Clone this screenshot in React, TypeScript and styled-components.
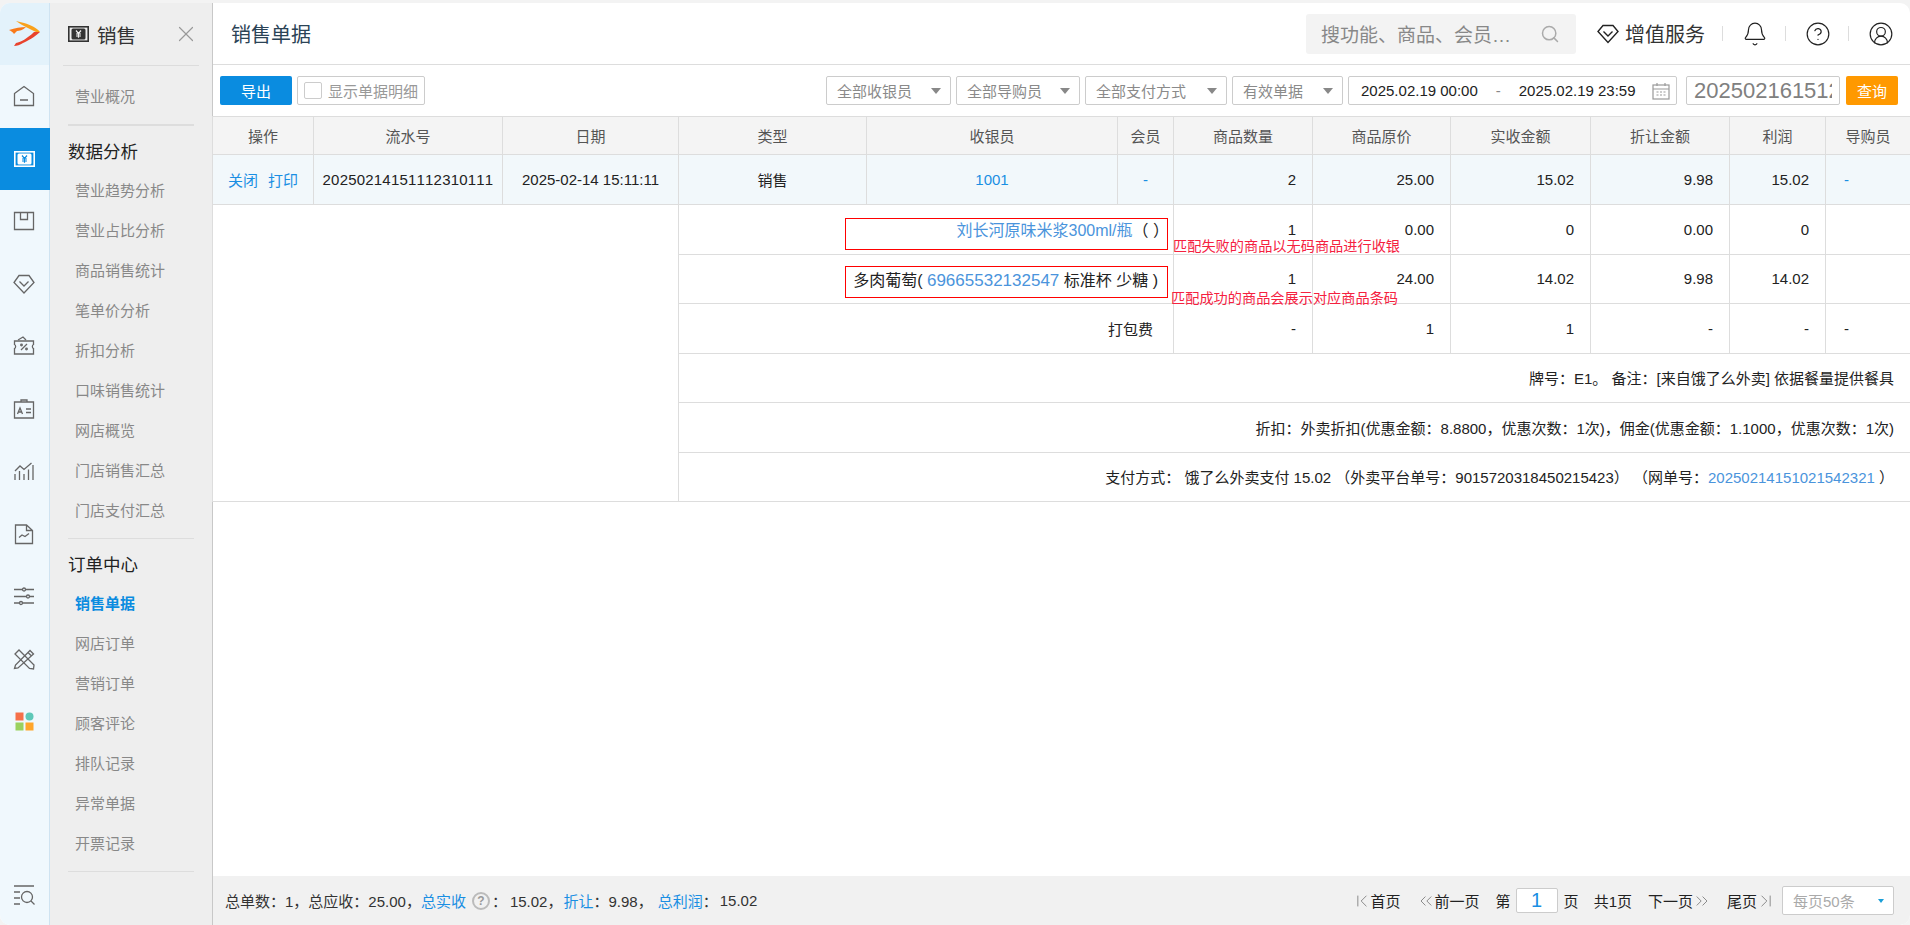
import React from 'react';
import styled, { createGlobalStyle } from 'styled-components';
import {
  Bell,
  ChevronFirst,
  ChevronLast,
  ChevronsLeft,
  ChevronsRight,
  CircleHelp,
  CircleUserRound,
  Search,
  X,
} from 'lucide-react';

const GlobalStyle = createGlobalStyle`
  html, body {
    margin: 0;
    padding: 0;
    background: #f3f3f3;
  }
  body {
    font-family: "Liberation Sans", "Noto Sans CJK SC", sans-serif;
    font-size: 15px;
    color: #333;
  }
`;

const Page = styled.div`
  box-sizing: border-box;
  width: 1910px;
  height: 925px;
  padding-top: 3px;
  overflow: hidden;
  background: #f3f3f3;
`;

const Shell = styled.div`
  display: flex;
  height: 100%;
  overflow: hidden;
  background: #fff;
  border-radius: 10px;
`;

const Rail = styled.nav`
  display: flex;
  flex-direction: column;
  flex: 0 0 50px;
  box-sizing: border-box;
  background: #f0f8fd;
  border-right: 1px solid #cfe3f1;
`;

const LogoCell = styled.div`
  display: flex;
  align-items: center;
  justify-content: center;
  flex: 0 0 62px;
  background: #e3f2fb;
`;

const RailItem = styled.div<{ $active?: boolean }>`
  display: flex;
  align-items: center;
  justify-content: center;
  flex: 0 0 62.5px;
  margin-right: ${(p) => (p.$active ? '-1px' : '0')};
  padding-right: 1px;
  color: ${(p) => (p.$active ? '#fff' : '#666')};
  background: ${(p) => (p.$active ? '#0a8ce0' : 'transparent')};
`;

const RailBottom = styled(RailItem)`
  flex: 0 0 60px;
  margin-top: auto;
`;

const Side = styled.aside`
  flex: 0 0 163px;
  box-sizing: border-box;
  background: #eee;
  border-right: 1px solid #c8c8c8;
`;

const SideHead = styled.div`
  display: flex;
  align-items: center;
  box-sizing: border-box;
  height: 63px;
  margin: 0 13px;
  padding: 0 0 0 5px;
  color: #333;
  font-size: 19.5px;
  border-bottom: 1px solid #dcdcdc;
`;

const SideHeadTitle = styled.span`
  flex: 1;
  margin-left: 8px;
`;

const SideList = styled.div`
  padding-top: 11px;
`;

const SideRule = styled.div<{ $thick?: boolean }>`
  height: ${(p) => (p.$thick ? '2px' : '1px')};
  margin: 7px 18px 7px 18px;
  background: #ddd;
`;

const SideTitle = styled.div`
  height: 38px;
  padding-left: 18px;
  color: #222;
  font-size: 17.5px;
  line-height: 38px;
`;

const SideLink = styled.div<{ $active?: boolean }>`
  height: 40px;
  padding-left: 25px;
  color: ${(p) => (p.$active ? '#0a8ce0' : '#888')};
  font-weight: ${(p) => (p.$active ? 700 : 400)};
  font-size: 15px;
  line-height: 40px;
`;

const Main = styled.main`
  display: flex;
  flex-direction: column;
  flex: 1;
  min-width: 0;
`;

const TopBar = styled.header`
  display: flex;
  align-items: center;
  flex: 0 0 62px;
  box-sizing: border-box;
  padding: 0 16px 0 18px;
  border-bottom: 1px solid #ddd;
`;

const PageTitle = styled.h1`
  flex: 1;
  margin: 0;
  color: #2b4356;
  font-weight: 400;
  font-size: 20px;
`;

const SearchBox = styled.div`
  display: flex;
  align-items: center;
  justify-content: space-between;
  box-sizing: border-box;
  width: 270px;
  height: 40px;
  padding: 0 16px 0 15px;
  color: #888;
  font-size: 19px;
  background: #f3f3f3;
  border-radius: 3px;
`;

const ValueAdded = styled.div`
  display: flex;
  align-items: center;
  gap: 6px;
  margin-left: 21px;
  color: #333;
  font-size: 20px;
`;

const BarSep = styled.span`
  width: 1px;
  height: 15px;
  margin: 0 19px 0 17px;
  background: #ddd;
`;

const BarIcon = styled.span`
  display: flex;
  color: #222;
`;

const Toolbar = styled.div`
  display: flex;
  align-items: center;
  flex: 0 0 51px;
  box-sizing: border-box;
  padding: 0 12px 0 7px;
`;

const ExportButton = styled.button`
  width: 72px;
  height: 29px;
  padding: 0;
  color: #fff;
  font: inherit;
  background: #0a8ce0;
  border: 0;
  border-radius: 2px;
`;

const DetailToggle = styled.label`
  display: flex;
  align-items: center;
  gap: 6px;
  box-sizing: border-box;
  width: 128px;
  height: 29px;
  margin-left: 5px;
  padding-left: 6px;
  color: #999;
  background: #fff;
  border: 1px solid #ccc;
  border-radius: 2px;
`;

const TickBox = styled.span`
  box-sizing: border-box;
  width: 18px;
  height: 17px;
  border: 1px solid #ccc;
  border-radius: 2px;
`;

const Filters = styled.div`
  display: flex;
  gap: 5px;
  margin-left: auto;
`;

const FilterSelect = styled.div<{ $w: number }>`
  display: flex;
  align-items: center;
  justify-content: space-between;
  box-sizing: border-box;
  width: ${(p) => p.$w}px;
  height: 29px;
  padding: 0 9px 0 10px;
  color: #8a8a8a;
  background: #fff;
  border: 1px solid #ccc;
  border-radius: 2px;
`;

const Caret = styled.i<{ $color?: string; $size?: number }>`
  width: 0;
  height: 0;
  border-top: ${(p) => p.$size ?? 6}px solid ${(p) => p.$color ?? '#888'};
  border-right: ${(p) => (p.$size ?? 6) - 1}px solid transparent;
  border-left: ${(p) => (p.$size ?? 6) - 1}px solid transparent;
`;

const DateRange = styled.div`
  display: flex;
  align-items: center;
  box-sizing: border-box;
  width: 329px;
  height: 29px;
  padding: 0 6px 0 12px;
  color: #222;
  background: #fff;
  border: 1px solid #ccc;
  border-radius: 2px;
`;

const DateDash = styled.span`
  width: 41px;
  color: #888;
  text-align: center;
`;

const DateIcon = styled.span`
  display: flex;
  margin-left: auto;
  color: #999;
`;

const SerialInput = styled.input`
  box-sizing: border-box;
  width: 154px;
  height: 29px;
  margin: 0 1px 0 4px;
  padding: 0 7px;
  color: #808080;
  font-size: 22px;
  font-family: inherit;
  background: #fff;
  border: 1px solid #ccc;
  border-radius: 2px;
  outline: none;
`;

const QueryButton = styled.button`
  width: 52px;
  height: 29px;
  padding: 0;
  color: #fff;
  font: inherit;
  background: #f90;
  border: 0;
  border-radius: 2px;
`;

const TableArea = styled.div`
  flex: 1;
  min-height: 0;
`;

const Table = styled.table`
  width: 1698px;
  margin-left: -1px;
  table-layout: fixed;
  border-collapse: collapse;
  font-size: 15px;
`;

const Th = styled.th`
  height: 37px;
  padding: 0;
  color: #555;
  font-weight: 400;
  background: #f4f4f4;
  border: 1px solid #ddd;
`;

const Td = styled.td<{ $align?: 'left' | 'right' }>`
  position: relative;
  box-sizing: border-box;
  height: 49.5px;
  padding: ${(p) => (p.$align === 'left' ? '0 0 0 18px' : p.$align === 'right' ? '0 16px 0 0' : '0')};
  color: #222;
  text-align: ${(p) => p.$align ?? 'center'};
  white-space: nowrap;
  border: 1px solid #ddd;
`;

const MainRow = styled.tr`
  background: #f2f8fb;
  td {
    height: 50px;
  }
`;

const SerialCell = styled(Td)`
  letter-spacing: 0.2px;
  font-kerning: none;
`;

const ProductCell = styled(Td)<{ $pad: number }>`
  padding-right: ${(p) => p.$pad}px;
  font-size: 16px;
  text-align: right;
`;

const PackCell = styled(Td)`
  padding-right: 20px;
  text-align: right;
`;

const Link = styled.span`
  color: #1a8fe3;
`;

const SoftLink = styled.span<{ $digits?: boolean }>`
  color: #4a94dc;
  font-size: ${(p) => (p.$digits ? '17px' : 'inherit')};
`;

const ActionGap = styled.span`
  display: inline-block;
  width: 10px;
`;

/* annotation laid over the table, part of the captured picture */
const RedBox = styled.div<{ $top: number }>`
  position: absolute;
  top: ${(p) => p.$top}px;
  right: 5px;
  width: 323px;
  height: 32px;
  box-sizing: border-box;
  border: 1px solid #f00;
  pointer-events: none;
`;

const RedNote = styled.div<{ $left: number; $top: number }>`
  position: absolute;
  top: ${(p) => p.$top}px;
  left: ${(p) => p.$left}px;
  z-index: 2;
  color: #f5213f;
  font-size: 14.2px;
  line-height: 18px;
`;

const Footer = styled.footer`
  display: flex;
  align-items: center;
  justify-content: space-between;
  flex: 0 0 49px;
  padding: 0 16px 0 12px;
  color: #333;
  background: #f1f1f1;
`;

const Totals = styled.div`
  display: flex;
  align-items: center;
`;

const TotalGap = styled.span<{ $w: number }>`
  display: inline-block;
  width: ${(p) => p.$w}px;
`;

const HelpDot = styled.span`
  display: flex;
  align-items: center;
  justify-content: center;
  box-sizing: border-box;
  width: 18px;
  height: 18px;
  margin: 0 2px 0 6px;
  color: #999;
  font-weight: 700;
  font-size: 12px;
  border: 2px solid #bbb;
  border-radius: 50%;
`;

const Pager = styled.div`
  display: flex;
  align-items: center;
  color: #222;
`;

const PagerLink = styled.span<{ $gap?: number }>`
  display: flex;
  align-items: center;
  margin-left: ${(p) => p.$gap ?? 0}px;
  svg {
    margin: 0 -3px;
    color: #777;
  }
`;

const PageInput = styled.input`
  box-sizing: border-box;
  width: 42px;
  height: 25px;
  margin: 0 6px 0 5px;
  color: #1a8fe3;
  font-size: 20px;
  font-family: inherit;
  text-align: center;
  background: #fff;
  border: 1px solid #ccc;
  border-radius: 2px;
  outline: none;
`;

const PageSize = styled.div`
  display: flex;
  align-items: center;
  justify-content: space-between;
  box-sizing: border-box;
  width: 112px;
  height: 29px;
  margin-left: 9px;
  padding: 0 9px 0 10px;
  color: #aaa;
  background: #fff;
  border: 1px solid #ccc;
  border-radius: 2px;
`;

const RailSvg = ({ children }: { children: React.ReactNode }) => (
  <svg width="22" height="22" viewBox="0 0 22 22" fill="none" stroke="currentColor" strokeWidth="1.3">
    {children}
  </svg>
);

const BillIcon = ({ fill }: { fill: string }) => (
  <svg width="21" height="16" viewBox="0 0 21 16" fill="none">
    <rect x="0.8" y="0.8" width="19.4" height="14.4" fill={fill} stroke="currentColor" strokeWidth="1.6" />
    <rect x="3.5" y="2.6" width="14" height="10.8" rx="1.5" fill="currentColor" />
    <path d="M8 4.5l2.5 3 2.5-3M10.5 7.5v4.2M8 8h5M8 10h5" stroke={fill} strokeWidth="1.2" />
  </svg>
);

const railIcons: React.ReactNode[] = [
  <RailSvg>
    <path d="M1.5 8.5L11 1.500l9.500 7V20.500h-19z" />
    <path d="M7 15h8" />
  </RailSvg>,
  <BillIcon fill="#0a8ce0" />,
  <RailSvg>
    <path d="M1.500 2.500h19v17h-19zM7.500 2.500V9.500h7V2.500" />
  </RailSvg>,
  <RailSvg>
    <path d="M6 2.500h10l5 7-10 10.500L1 9.500z" />
    <path d="M6.500 8.500l4.500 4.500 4.500-4.500" />
  </RailSvg>,
  <RailSvg>
    <path d="M1.500 6h19v3.500c-1.500.5-1.500 3.500 0 4V19h-19v-5.500c1.500-.5 1.500-3.500 0-4z" />
    <path d="M8 15l6-6M5 5l5-3 3 3" />
    <circle cx="8.500" cy="10" r=".8" />
    <circle cx="13.500" cy="14" r=".8" />
  </RailSvg>,
  <RailSvg>
    <path d="M1.500 4h19v16h-19zM8 4V2h6v2" />
    <path d="M4.500 16l2.500-6 2.500 6M5.500 14h3M13 11h5M13 14.500h5" />
  </RailSvg>,
  <RailSvg>
    <path d="M2 20v-6M6.500 20v-9M11 20v-6M15.500 20V9.500M20 20V5M2 11l5-5 4 3.500L18.500 3" />
  </RailSvg>,
  <RailSvg>
    <path d="M2.500 2h11l6 5.500V20.500h-17zM13.500 2v5.500h6" />
    <path d="M6 14.500l3-2.500 3 1.500 4-3" />
  </RailSvg>,
  <RailSvg>
    <path d="M1 4.500h20M1 11.500h20M1 18h20" />
    <circle cx="11" cy="4.500" r="1.500" fill="#f0f8fd" />
    <circle cx="15" cy="11.500" r="1.500" fill="#f0f8fd" />
    <circle cx="8" cy="18" r="1.500" fill="#f0f8fd" />
  </RailSvg>,
  <RailSvg>
    <path d="M2 6l4-4 15 15-.5 4-4-.5z" />
    <path d="M20.500 6l-3.500-3.500L2.500 17l-1 3.500 3.500-.5zM15 4.500l3.500 3.500" />
  </RailSvg>,
  <svg width="19" height="19" viewBox="0 0 19 19">
    <rect x="0.500" y="0.500" width="8" height="8" fill="#f5704a" />
    <circle cx="14.500" cy="4.500" r="4" fill="#5ec8b8" />
    <rect x="0.500" y="10.500" width="8" height="8" fill="#9ad15f" />
    <rect x="10.500" y="10.500" width="8" height="8" fill="#ffa62b" />
  </svg>,
];

const Logo = () => (
  <svg width="32" height="26" viewBox="0 0 32 26">
    <path d="M7 0l8 2c7 2 13 5 16 9h-4C21 8 14 5 7 0z" fill="#f9a11b" />
    <path d="M0 9c6-2 12-3 17-3-3 3-7 4-9 4l-3 3c-1-2-3-3-5-4z" fill="#f97a1a" />
    <path d="M31 11c-5 5-13 9-17 11-3 2-6 3-9 3l2-3c5-1 12-5 18-11z" fill="#e8432d" />
  </svg>
);

const columns = [101, 189, 176, 188, 251, 56, 139, 138, 140, 139, 96, 85];
const headers = ['操作', '流水号', '日期', '类型', '收银员', '会员', '商品数量', '商品原价', '实收金额', '折让金额', '利润', '导购员'];
const analysisLinks = ['营业趋势分析', '营业占比分析', '商品销售统计', '笔单价分析', '折扣分析', '口味销售统计', '网店概览', '门店销售汇总', '门店支付汇总'];
const orderLinks = ['销售单据', '网店订单', '营销订单', '顾客评论', '排队记录', '异常单据', '开票记录'];

const App = () => {
  return (
    <Page>
      <GlobalStyle />
      <Shell>
        <Rail>
          <LogoCell>
            <Logo />
          </LogoCell>
          {railIcons.map((icon, i) => (
            <RailItem key={i} $active={i === 1}>
              {icon}
            </RailItem>
          ))}
          <RailBottom>
            <RailSvg>
              <path d="M1 2h20M1 8h6M1 14h6M1 20h6" />
              <circle cx="14" cy="13" r="5.500" />
              <path d="M18 17l3.500 3.500" />
            </RailSvg>
          </RailBottom>
        </Rail>

        <Side>
          <SideHead>
            <BillIcon fill="#eee" />
            <SideHeadTitle>销售</SideHeadTitle>
            <X size={26} strokeWidth={1.1} color="#999" />
          </SideHead>
          <SideList>
            <SideLink>营业概况</SideLink>
            <SideRule $thick />
            <SideTitle>数据分析</SideTitle>
            {analysisLinks.map((name) => (
              <SideLink key={name}>{name}</SideLink>
            ))}
            <SideRule />
            <SideTitle>订单中心</SideTitle>
            {orderLinks.map((name, i) => (
              <SideLink key={name} $active={i === 0}>
                {name}
              </SideLink>
            ))}
            <SideRule />
          </SideList>
        </Side>

        <Main>
          <TopBar>
            <PageTitle>销售单据</PageTitle>
            <SearchBox>
              <span>搜功能、商品、会员…</span>
              <Search size={20} color="#aaa" strokeWidth={1.8} />
            </SearchBox>
            <ValueAdded>
              <svg width="22" height="20" viewBox="0 0 22 20" fill="none" stroke="#222" strokeWidth="1.4">
                <path d="M6 1.500h10l5 6-10 11L1 7.500z" />
                <path d="M6.500 7.500l4.500 4.500 4.500-4.500" />
              </svg>
              增值服务
            </ValueAdded>
            <BarSep />
            <BarIcon>
              <Bell size={26} strokeWidth={1.1} />
            </BarIcon>
            <BarSep />
            <BarIcon>
              <CircleHelp size={26} strokeWidth={1.1} />
            </BarIcon>
            <BarSep />
            <BarIcon>
              <CircleUserRound size={26} strokeWidth={1.1} />
            </BarIcon>
          </TopBar>

          <Toolbar>
            <ExportButton>导出</ExportButton>
            <DetailToggle>
              <TickBox />
              显示单据明细
            </DetailToggle>
            <Filters>
              <FilterSelect $w={125}>
                全部收银员
                <Caret />
              </FilterSelect>
              <FilterSelect $w={124}>
                全部导购员
                <Caret />
              </FilterSelect>
              <FilterSelect $w={142}>
                全部支付方式
                <Caret />
              </FilterSelect>
              <FilterSelect $w={111}>
                有效单据
                <Caret />
              </FilterSelect>
              <DateRange>
                <span>2025.02.19 00:00</span>
                <DateDash>-</DateDash>
                <span>2025.02.19 23:59</span>
                <DateIcon>
                  <svg width="18" height="18" viewBox="0 0 18 18" fill="none" stroke="currentColor" strokeWidth="1.2">
                    <rect x="1" y="3" width="16" height="14" />
                    <path d="M1 7h16M5 1v3M13 1v3M4.500 10h2M8 10h2M11.500 10h2M4.500 13h2M8 13h2M11.500 13h2" />
                  </svg>
                </DateIcon>
              </DateRange>
              <SerialInput readOnly value="202502161512" />
              <QueryButton>查询</QueryButton>
            </Filters>
          </Toolbar>

          <TableArea>
            <Table>
              <colgroup>
                {columns.map((w, i) => (
                  <col key={i} width={w} />
                ))}
              </colgroup>
              <thead>
                <tr>
                  {headers.map((h) => (
                    <Th key={h}>{h}</Th>
                  ))}
                </tr>
              </thead>
              <tbody>
                <MainRow>
                  <Td>
                    <Link>关闭</Link>
                    <ActionGap />
                    <Link>打印</Link>
                  </Td>
                  <SerialCell>20250214151112310111</SerialCell>
                  <Td>2025-02-14 15:11:11</Td>
                  <Td>销售</Td>
                  <Td>
                    <Link>1001</Link>
                  </Td>
                  <Td>
                    <Link>-</Link>
                  </Td>
                  <Td $align="right">2</Td>
                  <Td $align="right">25.00</Td>
                  <Td $align="right">15.02</Td>
                  <Td $align="right">9.98</Td>
                  <Td $align="right">15.02</Td>
                  <Td $align="left">
                    <Link>-</Link>
                  </Td>
                </MainRow>
                <tr>
                  <Td colSpan={3} rowSpan={6} />
                  <ProductCell colSpan={3} $pad={4}>
                    <SoftLink>刘长河原味米浆300ml/瓶</SoftLink>（ ）
                    <RedBox $top={13} />
                  </ProductCell>
                  <Td $align="right">
                    1<RedNote $left={-1} $top={32}>匹配失败的商品以无码商品进行收银</RedNote>
                  </Td>
                  <Td $align="right">0.00</Td>
                  <Td $align="right">0</Td>
                  <Td $align="right">0.00</Td>
                  <Td $align="right">0</Td>
                  <Td />
                </tr>
                <tr>
                  <ProductCell colSpan={3} $pad={15}>
                    多肉葡萄( <SoftLink $digits>69665532132547</SoftLink> 标准杯 少糖 )
                    <RedBox $top={11} />
                  </ProductCell>
                  <Td $align="right">
                    1<RedNote $left={-3} $top={34}>匹配成功的商品会展示对应商品条码</RedNote>
                  </Td>
                  <Td $align="right">24.00</Td>
                  <Td $align="right">14.02</Td>
                  <Td $align="right">9.98</Td>
                  <Td $align="right">14.02</Td>
                  <Td />
                </tr>
                <tr>
                  <PackCell colSpan={3}>打包费</PackCell>
                  <Td $align="right">-</Td>
                  <Td $align="right">1</Td>
                  <Td $align="right">1</Td>
                  <Td $align="right">-</Td>
                  <Td $align="right">-</Td>
                  <Td $align="left">-</Td>
                </tr>
                <tr>
                  <Td colSpan={9} $align="right">
                    牌号：E1。 备注：[来自饿了么外卖] 依据餐量提供餐具
                  </Td>
                </tr>
                <tr>
                  <Td colSpan={9} $align="right">
                    折扣：外卖折扣(优惠金额：8.8800，优惠次数：1次)，佣金(优惠金额：1.1000，优惠次数：1次)
                  </Td>
                </tr>
                <tr>
                  <Td colSpan={9} $align="right">
                    支付方式： 饿了么外卖支付 15.02 （外卖平台单号：9015720318450215423） （网单号：
                    <SoftLink>20250214151021542321</SoftLink> ）
                  </Td>
                </tr>
              </tbody>
            </Table>
          </TableArea>

          <Footer>
            <Totals>
              总单数：1，总应收：25.00，<Link>总实收</Link>
              <HelpDot>?</HelpDot>：<TotalGap $w={3} />15.02，<TotalGap $w={1} /><Link>折让</Link>：9.98，<TotalGap $w={5} />
              <Link>总利润</Link>：<TotalGap $w={2} />15.02
            </Totals>
            <Pager>
              <PagerLink>
                <ChevronFirst size={20} strokeWidth={1} />
                <TotalGap $w={2} />首页
              </PagerLink>
              <PagerLink $gap={18}>
                <ChevronsLeft size={20} strokeWidth={1} />
                <TotalGap $w={2} />前一页
              </PagerLink>
              <PagerLink $gap={16}>第</PagerLink>
              <PageInput readOnly value="1" />
              <span>页</span>
              <PagerLink $gap={15}>共1页</PagerLink>
              <PagerLink $gap={16}>
                下一页
                <TotalGap $w={2} />
                <ChevronsRight size={20} strokeWidth={1} />
              </PagerLink>
              <PagerLink $gap={18}>
                尾页
                <TotalGap $w={2} />
                <ChevronLast size={20} strokeWidth={1} />
              </PagerLink>
              <PageSize>
                每页50条
                <Caret $color="#1a9fd8" $size={4} />
              </PageSize>
            </Pager>
          </Footer>
        </Main>
      </Shell>
    </Page>
  );
};

export default App;
